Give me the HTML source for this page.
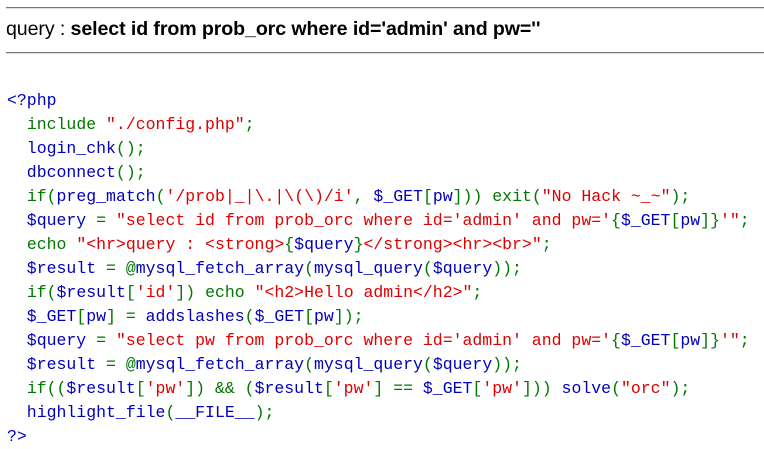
<!DOCTYPE html>
<html><head><meta charset="utf-8"><style>
body{margin:0;background:#fff;width:764px;height:447px;overflow:hidden;position:relative}
.hr{position:absolute;left:6px;right:0;height:0;border-top:1px solid #777;border-bottom:1px solid #ddd}
.q{position:absolute;left:6px;top:18px;font:19.6px "Liberation Sans",sans-serif;color:#000;letter-spacing:-0.1px;white-space:nowrap}
.q b{font-weight:bold}
pre{position:absolute;left:7px;top:89px;margin:0;font:16.5px/24px "Liberation Mono",monospace;color:#0000BB}
.k{color:#007700}.s{color:#DD0000}
</style></head><body>
<div class="hr" style="top:7px"></div>
<div class="q">query : <b>select id from prob_orc where id='admin' and pw=''</b></div>
<div class="hr" style="top:52px"></div>
<pre>&lt;?php
  <span class="k">include </span><span class="s">"./config.php"</span><span class="k">;</span>
  login_chk<span class="k">();</span>
  dbconnect<span class="k">();</span>
  <span class="k">if(</span>preg_match<span class="k">(</span><span class="s">'/prob|_|\.|\(\)/i'</span><span class="k">, </span>$_GET<span class="k">[</span>pw<span class="k">])) exit(</span><span class="s">"No Hack ~_~"</span><span class="k">);</span>
  $query <span class="k">= </span><span class="s">"select id from prob_orc where id='admin' and pw='</span><span class="k">{</span>$_GET<span class="k">[</span>pw<span class="k">]}</span><span class="s">'"</span><span class="k">;</span>
  <span class="k">echo </span><span class="s">"&lt;hr&gt;query : &lt;strong&gt;</span><span class="k">{</span>$query<span class="k">}</span><span class="s">&lt;/strong&gt;&lt;hr&gt;&lt;br&gt;"</span><span class="k">;</span>
  $result <span class="k">= @</span>mysql_fetch_array<span class="k">(</span>mysql_query<span class="k">(</span>$query<span class="k">));</span>
  <span class="k">if(</span>$result<span class="k">[</span><span class="s">'id'</span><span class="k">]) echo </span><span class="s">"&lt;h2&gt;Hello admin&lt;/h2&gt;"</span><span class="k">;</span>
  $_GET<span class="k">[</span>pw<span class="k">] = </span>addslashes<span class="k">(</span>$_GET<span class="k">[</span>pw<span class="k">]);</span>
  $query <span class="k">= </span><span class="s">"select pw from prob_orc where id='admin' and pw='</span><span class="k">{</span>$_GET<span class="k">[</span>pw<span class="k">]}</span><span class="s">'"</span><span class="k">;</span>
  $result <span class="k">= @</span>mysql_fetch_array<span class="k">(</span>mysql_query<span class="k">(</span>$query<span class="k">));</span>
  <span class="k">if((</span>$result<span class="k">[</span><span class="s">'pw'</span><span class="k">]) &amp;&amp; (</span>$result<span class="k">[</span><span class="s">'pw'</span><span class="k">] == </span>$_GET<span class="k">[</span><span class="s">'pw'</span><span class="k">])) </span>solve<span class="k">(</span><span class="s">"orc"</span><span class="k">);</span>
  highlight_file<span class="k">(</span>__FILE__<span class="k">);</span>
?&gt;</pre>
</body></html>
